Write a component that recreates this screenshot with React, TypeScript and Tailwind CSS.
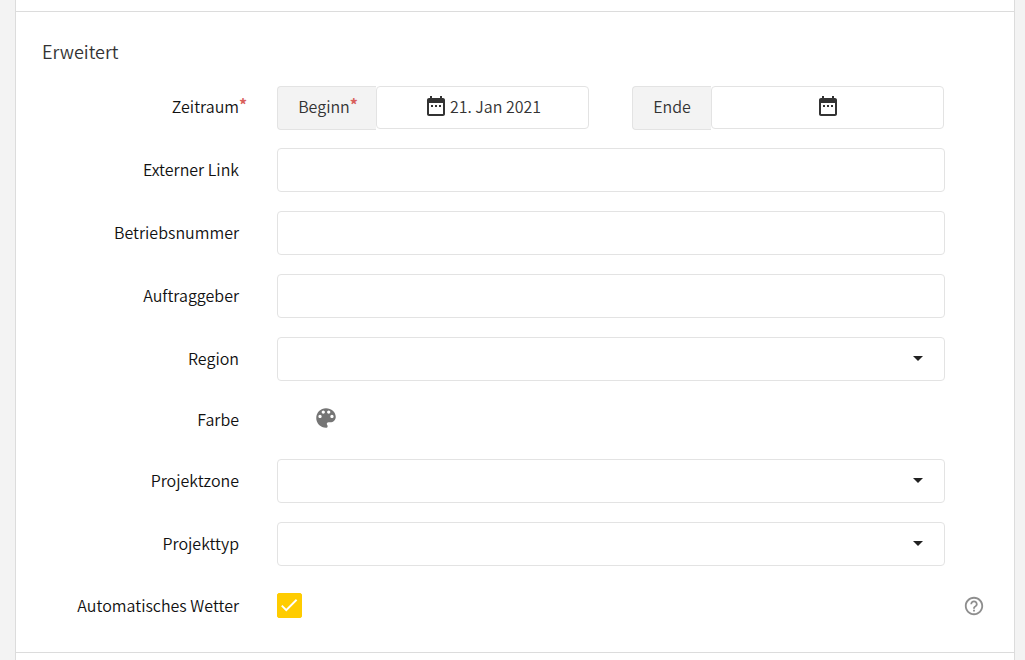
import type { ReactNode } from "react";
import { MdArrowDropDown, MdCheck, MdHelpOutline } from "react-icons/md";

const controlClass =
  "h-11 w-full rounded border border-[#e3e3e3] bg-white px-4 outline-none focus:border-[#ffcc00]";

function CalendarIcon() {
  return (
    <svg viewBox="0 0 24 24" className="size-6 shrink-0 fill-current" aria-hidden="true">
      <path d="M9 11H7v2h2v-2zm4 0h-2v2h2v-2zm4 0h-2v2h2v-2zm2-7h-1V2h-2v2H8V2H6v2H5c-1.11 0-1.99.9-1.99 2L3 20c0 1.1.89 2 2 2h14c1.1 0 2-.9 2-2V6c0-1.1-.9-2-2-2zm0 16H5V9h14v11z" />
    </svg>
  );
}

function PaletteIcon() {
  return (
    <svg viewBox="0 0 24 24" className="size-[26px] fill-current" aria-hidden="true">
      <path d="M12 3c-4.97 0-9 4.03-9 9s4.03 9 9 9c.83 0 1.5-.67 1.5-1.5 0-.39-.15-.74-.39-1.01-.23-.26-.38-.61-.38-.99 0-.83.67-1.5 1.5-1.5H16c2.76 0 5-2.24 5-5 0-4.42-4.03-8-9-8zm-5.5 9c-.83 0-1.5-.67-1.5-1.5S5.67 9 6.5 9 8 9.67 8 10.5 7.33 12 6.5 12zm3-4C8.67 8 8 7.33 8 6.5S8.67 5 9.5 5s1.5.67 1.5 1.5S10.33 8 9.5 8zm5 0c-.83 0-1.5-.67-1.5-1.5S13.67 5 14.5 5s1.5.67 1.5 1.5S15.33 8 14.5 8zm3 4c-.83 0-1.5-.67-1.5-1.5S16.67 9 17.5 9s1.5.67 1.5 1.5-.67 1.5-1.5 1.5z" />
    </svg>
  );
}

function Required() {
  return <span className="absolute -top-0.5 left-full font-bold text-[#d9605c]">*</span>;
}

type RowProps = {
  label: string;
  id: string;
  height?: string;
  required?: boolean;
  aside?: ReactNode;
  children: ReactNode;
};

function Row({ label, id, height = "h-11", required, aside, children }: RowProps) {
  return (
    <div className={`flex items-center ${height}`}>
      <label htmlFor={id} className="w-[198px] shrink-0 pb-[3px] text-right text-[#111111]">
        <span className="relative">
          {label}
          {required && <Required />}
        </span>
      </label>
      <div className="ml-[38px] min-w-0 flex-1">{children}</div>
      <div className="flex w-[69px] shrink-0 justify-end pr-[29px]">{aside}</div>
    </div>
  );
}

function TextRow({ label, id }: { label: string; id: string }) {
  return (
    <Row label={label} id={id}>
      <input id={id} type="text" className={controlClass} />
    </Row>
  );
}

function SelectRow({ label, id }: { label: string; id: string }) {
  return (
    <Row label={label} id={id}>
      <div className="relative">
        <select id={id} className={`${controlClass} appearance-none`}>
          <option value=""></option>
        </select>
        <MdArrowDropDown
          size={24}
          className="pointer-events-none absolute top-[9px] right-[15px] text-[#212121]"
        />
      </div>
    </Row>
  );
}

type DateFieldProps = {
  label: string;
  id: string;
  width: string;
  value?: string;
  required?: boolean;
};

function DateField({ label, id, width, value, required }: DateFieldProps) {
  return (
    <div className="flex items-start">
      <label
        htmlFor={id}
        className={`flex h-11 shrink-0 items-center justify-center rounded-l border border-r-0 border-[#e3e3e3] bg-[#f3f3f3] pb-1 ${width}`}
      >
        <span className={required ? "relative mr-1.5" : "relative"}>
          {label}
          {required && <Required />}
        </span>
      </label>
      <button
        id={id}
        type="button"
        aria-label={value ? `${label}: ${value}` : label}
        className="flex h-[43px] min-w-0 flex-1 items-center justify-center gap-0.5 rounded border border-[#e3e3e3] bg-white pb-[3px]"
      >
        <CalendarIcon />
        {value && <span>{value}</span>}
      </button>
    </div>
  );
}

export default function App() {
  return (
    <div className="min-h-screen bg-[#f3f3f3] pr-[10px] pl-[15px] font-['Noto_Sans_CJK_SC',sans-serif] text-base leading-6 font-[350] text-[#333333]">
      <main className="min-h-screen border-x border-[#dcdcdc] bg-white pt-[11px]">
        <form className="border-y border-[#dcdcdc] pt-[27px] pb-[25px]">
          <h2 className="pl-[26px] text-lg leading-6 font-[350]">Erweitert</h2>
          <div className="mt-[23px] flex flex-col gap-[19px] pl-[25px]">
            <Row label="Zeitraum" id="beginn" height="h-[43px]" required>
              <div className="grid h-[43px] grid-cols-2 gap-[43px] pr-px">
                <DateField
                  label="Beginn"
                  id="beginn"
                  width="w-[99px]"
                  value="21. Jan 2021"
                  required
                />
                <DateField label="Ende" id="ende" width="w-[79px]" />
              </div>
            </Row>
            <TextRow label="Externer Link" id="link" />
            <TextRow label="Betriebsnummer" id="betriebsnummer" />
            <TextRow label="Auftraggeber" id="auftraggeber" />
            <SelectRow label="Region" id="region" />
            <Row label="Farbe" id="farbe" height="h-10">
              <button
                id="farbe"
                type="button"
                aria-label="Farbe"
                className="mb-1 ml-9 block text-[#757575]"
              >
                <PaletteIcon />
              </button>
            </Row>
            <SelectRow label="Projektzone" id="projektzone" />
            <SelectRow label="Projekttyp" id="projekttyp" />
            <Row
              label="Automatisches Wetter"
              id="wetter"
              height="h-[42px]"
              aside={
                <button type="button" aria-label="Hilfe" className="text-[#8e8e8e]">
                  <MdHelpOutline size={22} />
                </button>
              }
            >
              <div className="relative mb-px size-[25px]">
                <input
                  id="wetter"
                  type="checkbox"
                  defaultChecked
                  className="peer block size-[25px] appearance-none rounded-xs border border-[#cccccc] bg-white checked:border-[#ffcc00] checked:bg-[#ffcc00]"
                />
                <MdCheck
                  size={22}
                  className="pointer-events-none absolute top-px left-px hidden text-white peer-checked:block"
                />
              </div>
            </Row>
          </div>
        </form>
      </main>
    </div>
  );
}
